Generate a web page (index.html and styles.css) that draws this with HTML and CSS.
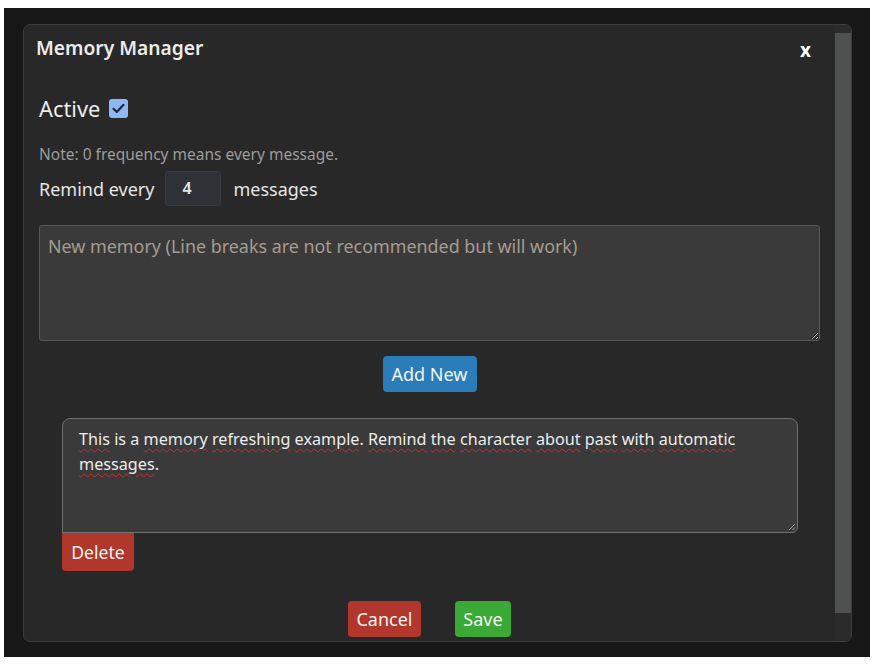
FILE: index.html
```html
<!DOCTYPE html>
<html>
<head>
<meta charset="utf-8">
<link rel="stylesheet" href="styles.css">
</head>
<body>
<div class="backdrop">
  <div class="modal">
    <div class="content">
      <div class="header">
        <span class="title">Memory Manager</span>
        <span class="close">x</span>
      </div>
      <div class="body">
        <div class="active-row">
          <span>Active</span>
          <span class="checkbox">
            <svg width="19" height="19" viewBox="0 0 19 19"><path d="M4.5 9.8 L7.8 13 L14.5 5.8" fill="none" stroke="#1f2a36" stroke-width="2.2" stroke-linecap="round" stroke-linejoin="round"/></svg>
          </span>
        </div>
        <div class="note">Note: 0 frequency means every message.</div>
        <div class="remind-row">
          <span>Remind every</span>
          <span class="num-input">4</span>
          <span>messages</span>
        </div>
        <textarea class="new-memory" placeholder="New memory (Line breaks are not recommended but will work)"></textarea>
        <div class="add-row"><span class="btn btn-blue">Add New</span></div>
        <div class="memory-item">
          <div class="memory-text"><span class="sp">This</span> is a <span class="sp">memory</span> <span class="sp">refreshing</span> <span class="sp">example</span>. <span class="sp">Remind</span> <span class="sp">the</span> <span class="sp">character</span> <span class="sp">about</span> <span class="sp">past</span> <span class="sp">with</span> <span class="sp">automatic</span> <span class="sp">messages</span>.</div>
          <svg class="grip" width="8" height="8" viewBox="0 0 8 8"><path d="M7 1 L1 7 M7 4.5 L4.5 7" stroke="#9a9a9a" stroke-width="1"/></svg>
        </div>
        <div class="delete-row"><span class="btn btn-red btn-delete">Delete</span></div>
        <div class="footer">
          <span class="btn btn-red">Cancel</span>
          <span class="btn btn-green">Save</span>
        </div>
      </div>
    </div>
    <div class="scrollbar"><div class="thumb"></div></div>
  </div>
</div>
</body>
</html>
```
FILE: styles.css
```css
html, body {
  margin: 0;
  padding: 0;
  background: #ffffff;
}
body {
  padding: 8px 9px 8px 4px;
  font-family: "Noto Sans", "Open Sans", sans-serif;
  color: #e4e4e4;
}
.backdrop {
  background: #171717;
  height: 649px;
  padding: 16px 18px 0 19px;
  box-sizing: border-box;
}
.modal {
  display: flex;
  height: 618px;
  background: #282828;
  border: 1px solid #3c3c3c;
  border-radius: 7px;
  box-sizing: border-box;
  overflow: hidden;
}
.content {
  flex: 1;
  min-width: 0;
}
.header {
  display: flex;
  justify-content: space-between;
  align-items: flex-start;
  padding: 10px 24px 0 12px;
  height: 48px;
  box-sizing: border-box;
}
.title {
  font-size: 19.2px;
  line-height: 26px;
  font-weight: 600;
  color: #ececec;
}
.close {
  font-size: 19px;
  line-height: 30px;
  font-weight: 700;
  color: #ffffff;
}
.body {
  padding: 0 15px 0 15px;
}
.active-row {
  display: flex;
  align-items: center;
  gap: 9px;
  margin-top: 22px;
  font-size: 21.8px;
  line-height: 28px;
  color: #ededed;
}
.checkbox {
  width: 19px;
  height: 19px;
  background: #8cb8f8;
  border-radius: 3px;
  display: block;
  margin-top: -1px;
}
.checkbox svg { display: block; }
.note {
  margin-top: 21px;
  font-size: 15.5px;
  line-height: 20px;
  color: #9c9c9c;
}
.remind-row {
  display: flex;
  align-items: center;
  margin-top: 7px;
  font-size: 18px;
  color: #e6e6e6;
}
.num-input {
  width: 56px;
  height: 35px;
  box-sizing: border-box;
  margin: 0 12px 0 11px;
  padding-left: 16px;
  background: #2e3136;
  border: 1px solid #363b42;
  border-radius: 3px;
  font-size: 16px;
  font-weight: 600;
  line-height: 33px;
  color: #e8e8e8;
}
.new-memory {
  display: block;
  width: 100%;
  height: 116px;
  box-sizing: border-box;
  margin-top: 19px;
  padding: 7px 8px;
  background: #3a3a3a;
  border: 1px solid #575757;
  border-radius: 3px;
  font-family: "Noto Sans", "Open Sans", sans-serif;
  font-size: 17.9px;
  line-height: 26px;
  color: #e4e4e4;
  resize: vertical;
  outline: none;
}
.new-memory::placeholder {
  color: #a59d90;
}
.add-row {
  display: flex;
  justify-content: center;
  margin-top: 15px;
}
.btn {
  display: inline-flex;
  align-items: center;
  justify-content: center;
  height: 36px;
  border-radius: 4px;
  font-size: 18px;
  color: #f4f4f4;
  box-sizing: border-box;
}
.btn-blue {
  background: #2a7db8;
  width: 94px;
}
.btn-red {
  background: #b1362c;
  width: 73px;
}
.btn-green {
  background: #3aa935;
  width: 56px;
}
.memory-item {
  position: relative;
  margin: 26px 22px 0 23px;
  height: 115px;
  box-sizing: border-box;
  padding: 8px 16px;
  background: #3a3a3a;
  border: 1px solid #707070;
  border-radius: 8px 8px 6px 0;
}
.memory-text {
  font-size: 16.2px;
  line-height: 25px;
  color: #ececec;
}
.sp {
  text-decoration: underline wavy #d42a2a;
  text-decoration-thickness: 1px;
  text-underline-offset: 3px;
}
.grip {
  position: absolute;
  right: 1px;
  bottom: 1px;
}
.delete-row {
  margin-left: 23px;
}
.btn-delete {
  width: 72px;
  height: 38px;
  font-size: 17.6px;
  border-radius: 0 0 4px 4px;
}
.footer {
  display: flex;
  justify-content: center;
  gap: 34px;
  margin-top: 30px;
}
.scrollbar {
  width: 16px;
  padding-top: 8px;
  background: #2b2b2b;
}
.thumb {
  height: 580px;
  background: #4f5150;
}
```
